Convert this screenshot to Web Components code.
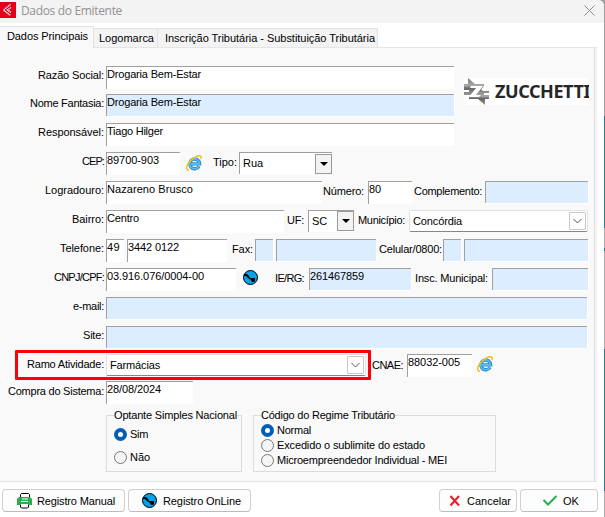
<!DOCTYPE html>
<html lang="pt-BR">
<head>
<meta charset="utf-8">
<title>Dados do Emitente</title>
<style>
  body {
    margin: 0;
    width: 605px;
    height: 517px;
    overflow: hidden;
    font: 11px/12px "Liberation Sans", Arial, sans-serif;
    color: #000;
    background: linear-gradient(#a0a0a0 116px, #2b7f8b 116px 228px, #a9a9a9 228px 248px, #2b7f8b 248px 251px, #a9a9a9 251px 349px, #2b7f8b 349px 491px, #a9a9a9 491px);
  }
</style>
</head>
<body>
<app-window>
  <fit-text slot="title" w="101">Dados do Emitente</fit-text>

  <tab-item slot="tabs" active style="width:94px"><fit-text w="81">Dados Principais</fit-text></tab-item>
  <tab-item slot="tabs" style="width:64px"><fit-text w="55">Logomarca</fit-text></tab-item>
  <tab-item slot="tabs" style="width:220px"><fit-text w="210">Inscrição Tributária - Substituição Tributária</fit-text></tab-item>

  <form-row style="height:28px">
    <form-label first><fit-text w="66">Razão Social:</fit-text></form-label>
    <text-field style="width:348px"><fit-text w="94">Drogaria Bem-Estar</fit-text></text-field>
    <brand-logo></brand-logo>
  </form-row>
  <form-row>
    <form-label first><fit-text w="74">Nome Fantasia:</fit-text></form-label>
    <text-field blue style="width:348px"><fit-text w="94">Drogaria Bem-Estar</fit-text></text-field>
  </form-row>
  <form-row>
    <form-label first><fit-text w="66">Responsável:</fit-text></form-label>
    <text-field style="width:348px"><fit-text w="56">Tiago Hilger</fit-text></text-field>
  </form-row>
  <form-row>
    <form-label first><fit-text w="22">CEP:</fit-text></form-label>
    <text-field style="width:74px"><fit-text w="52">89700-903</fit-text></text-field>
    <ui-icon name="browser" style="margin:3px 0 0 6px"></ui-icon>
    <form-label low style="width:37px;padding-left:0"><fit-text w="24" style="margin-left:11px">Tipo:</fit-text></form-label>
    <classic-select style="width:93px"><fit-text w="20">Rua</fit-text></classic-select>
  </form-row>
  <form-row>
    <form-label first><fit-text w="59">Logradouro:</fit-text></form-label>
    <text-field style="width:216px"><fit-text w="86">Nazareno Brusco</fit-text></text-field>
    <form-label low style="width:46px"><fit-text w="41">Número:</fit-text></form-label>
    <text-field style="width:44px"><fit-text w="12">80</fit-text></text-field>
    <form-label low style="width:73px"><fit-text w="68" style="margin-left:1px">Complemento:</fit-text></form-label>
    <text-field blue style="width:103px"></text-field>
  </form-row>
  <form-row>
    <form-label first><fit-text w="32">Bairro:</fit-text></form-label>
    <text-field style="width:178px"><fit-text w="32">Centro</fit-text></text-field>
    <form-label low style="width:24px"><fit-text w="17" style="margin-left:2px">UF:</fit-text></form-label>
    <classic-select flush style="width:46px"><fit-text w="15">SC</fit-text></classic-select>
    <form-label low style="width:55px"><fit-text w="47" style="margin-left:3px">Município:</fit-text></form-label>
    <combo-box style="width:179px"><fit-text w="49">Concórdia</fit-text></combo-box>
  </form-row>
  <form-row>
    <form-label first><fit-text w="44">Telefone:</fit-text></form-label>
    <text-field style="width:18px"><fit-text w="13">49</fit-text></text-field>
    <text-field style="width:100px;margin-left:3px"><fit-text w="51">3442 0122</fit-text></text-field>
    <form-label low style="width:28px"><fit-text w="21" style="margin-left:4px">Fax:</fit-text></form-label>
    <text-field blue style="width:18px"></text-field>
    <text-field blue style="width:100px;margin-left:3px"></text-field>
    <form-label low style="width:67px"><fit-text w="63" style="margin-left:2px">Celular/0800:</fit-text></form-label>
    <text-field blue style="width:18px"></text-field>
    <text-field blue style="width:124px;margin-left:3px"></text-field>
  </form-row>
  <form-row>
    <form-label first><fit-text w="50">CNPJ/CPF:</fit-text></form-label>
    <text-field style="width:130px"><fit-text w="97">03.916.076/0004-00</fit-text></text-field>
    <ui-icon name="globe" style="margin:2px 0 0 7px"></ui-icon>
    <form-label low style="width:50px"><fit-text w="29" style="margin-left:15px">IE/RG:</fit-text></form-label>
    <text-field blue style="width:102px"><fit-text w="54">261467859</fit-text></text-field>
    <form-label low style="width:81px"><fit-text w="73" style="margin-left:3px">Insc. Municipal:</fit-text></form-label>
    <text-field blue style="width:96px"></text-field>
  </form-row>
  <form-row>
    <form-label first><fit-text w="31">e-mail:</fit-text></form-label>
    <text-field blue style="width:481px"></text-field>
  </form-row>
  <form-row style="height:28px">
    <form-label first><fit-text w="21">Site:</fit-text></form-label>
    <text-field blue style="width:481px"></text-field>
  </form-row>
  <form-row highlight style="height:27px">
    <form-label first low><fit-text w="77">Ramo Atividade:</fit-text></form-label>
    <combo-box style="width:260px"><fit-text w="50">Farmácias</fit-text></combo-box>
    <form-label low style="width:41px"><fit-text w="31" style="margin-left:5px;padding-top:1px">CNAE:</fit-text></form-label>
    <text-field style="width:65px"><fit-text w="52">88032-005</fit-text></text-field>
    <ui-icon name="browser" style="margin:2px 0 0 5px"></ui-icon>
  </form-row>
  <form-row style="height:34px">
    <form-label first low><fit-text w="96">Compra do Sistema:</fit-text></form-label>
    <text-field style="width:87px"><fit-text w="54">28/08/2024</fit-text></text-field>
  </form-row>
  <form-row groups>
    <radio-group style="width:136px;--gap:23px;--first:12px">
      <fit-text slot="legend" w="123">Optante Simples Nacional</fit-text>
      <radio-option checked><fit-text w="18">Sim</fit-text></radio-option>
      <radio-option><fit-text w="20">Não</fit-text></radio-option>
    </radio-group>
    <radio-group style="width:243px;--gap:15px;--first:8px">
      <fit-text slot="legend" w="134">Código do Regime Tributário</fit-text>
      <radio-option checked><fit-text w="34">Normal</fit-text></radio-option>
      <radio-option><fit-text w="148">Excedido o sublimite do estado</fit-text></radio-option>
      <radio-option><fit-text w="170">Microempreendedor Individual - MEI</fit-text></radio-option>
    </radio-group>
  </form-row>

  <push-button slot="actions" style="width:123px;--pad:14px"><ui-icon slot="icon" name="printer"></ui-icon><fit-text w="78" style="margin-left:3px">Registro Manual</fit-text></push-button>
  <push-button slot="actions" style="width:123px;--pad:13px"><ui-icon slot="icon" name="globe"></ui-icon><fit-text w="78" style="margin-left:4px">Registro OnLine</fit-text></push-button>
  <push-button slot="actions" style="width:78px;--pad:7px;margin-left:auto"><ui-icon slot="icon" name="cross"></ui-icon><fit-text w="44" style="margin-left:3px">Cancelar</fit-text></push-button>
  <push-button slot="actions" style="width:78px;--pad:21px"><ui-icon slot="icon" name="check"></ui-icon><fit-text w="16" style="margin-left:4px">OK</fit-text></push-button>
</app-window>

<script>
  function define(name, html, Base = HTMLElement) {
    const template = document.createElement("template");
    template.innerHTML = html;
    customElements.define(name, class extends Base {
      constructor() {
        super();
        this.attachShadow({ mode: "open" }).appendChild(template.content.cloneNode(true));
      }
    });
  }

  // spreads its text evenly over the width given in "w"
  class FitText extends HTMLElement {
    connectedCallback() {
      const width = Number(this.getAttribute("w"));
      const range = document.createRange();
      range.selectNodeContents(this);
      const natural = range.getBoundingClientRect().width;
      this.style.letterSpacing = (width - natural) / this.textContent.length + "px";
    }
  }

  define("app-window", `
    <style>
      :host {
        display: flex;
        flex-direction: column;
        width: 604px;
        height: 517px;
        background: #fff;
        border-top-right-radius: 6px;
        overflow: hidden;
      }
      header {
        display: flex;
        height: 23px;
        flex: none;
        background: #f3f3f3;
      }
      header svg { display: block; }
      .title {
        flex: 1;
        padding: 2px 0 0 5px;
        font: 12px/18px "Open Sans", "Noto Sans", sans-serif;
        color: #929292;
      }
      .close { margin: 5px 9px 0 0; }
      nav {
        display: flex;
        align-items: flex-end;
        height: 24px;
        padding-top: 1px;
        box-sizing: border-box;
        flex: none;
      }
      main {
        box-sizing: border-box;
        width: 597px;
        height: 435px;
        flex: none;
        padding-top: 18px;
        background: #f9f9f9;
        border: solid #e5e5e5;
        border-width: 1px 0 1px 0;
        box-shadow: inset -2px 0 #f3f3f3, inset -3px 0 #dfdfdf;
      }
      footer {
        display: flex;
        gap: 3px;
        padding: 7px 6px 0 2px;
      }
    </style>
    <header>
      <svg width="16" height="18" viewBox="0 0 16 18">
        <rect y="2" width="16" height="16" fill="#e2001a"/>
        <path d="M10.500 4.500 3.500 10l7 5.500M11 7.500 7.500 10l3.500 2.500" fill="none" stroke="#fff" stroke-width="1.400" stroke-dasharray="1.300 .5"/>
      </svg>
      <div class="title"><slot name="title"></slot></div>
      <svg class="close" width="11" height="11"><path d="m.5.5 10 10m0-10-10 10" stroke="#8b8b8b" fill="none"/></svg>
    </header>
    <nav><slot name="tabs"></slot></nav>
    <main><slot></slot></main>
    <footer><slot name="actions"></slot></footer>
  `);

  define("tab-item", `
    <style>
      :host {
        display: block;
        box-sizing: border-box;
        height: 19px;
        padding: 3px 0 0 5px;
        background: #f3f3f3;
        border: solid #e3e3e3;
        border-width: 1px 1px 0 0;
      }
      :host([active]) {
        position: relative;
        height: 22px;
        margin-bottom: -1px;
        padding: 3px 0 0 7px;
        background: #f9f9f9;
      }
      :host(:nth-of-type(3)) { padding-left: 7px; }
    </style>
    <slot></slot>
  `);

  define("form-row", `
    <style>
      :host {
        position: relative;
        display: flex;
        align-items: flex-start;
        height: 29px;
      }
      :host([groups]) { gap: 11px; padding-left: 106px; }
      .frame { display: none; }
      /* red frame drawn over the row */
      :host([highlight]) .frame {
        display: block;
        position: absolute;
        box-sizing: border-box;
        left: 15px;
        top: -4px;
        width: 356px;
        height: 30px;
        border: 3px solid #fb0007;
        border-radius: 1px;
      }
    </style>
    <slot></slot>
    <div class="frame"></div>
  `);

  define("form-label", `
    <style>
      :host {
        display: block;
        box-sizing: border-box;
        flex: none;
        padding: 3px 0 0 1px;
        white-space: nowrap;
      }
      :host([low]) { padding-top: 4px; }
      :host([first]) {
        width: 106px;
        padding-right: 2px;
        text-align: right;
      }
    </style>
    <slot></slot>
  `);

  define("text-field", `
    <style>
      :host {
        display: block;
        box-sizing: border-box;
        flex: none;
        height: 23px;
        padding: 1px 0 0;
        background: #fff;
        border: solid #a0a0a0;
        border-width: 1px 0 0 1px;
        white-space: nowrap;
      }
      :host([blue]) {
        height: 22px;
        background: #dcedff;
        box-shadow: 0 1px #fff, 1px 0 #fff;
      }
    </style>
    <slot></slot>
  `);

  define("classic-select", `
    <style>
      :host {
        display: flex;
        justify-content: space-between;
        box-sizing: border-box;
        flex: none;
        height: 22px;
        padding: 1px 0 0 3px;
        border: solid #a0a0a0;
        border-width: 1px 0 0 1px;
        background: #fff;
      }
      :host([flush]) { padding-top: 0; }
      .text { padding-top: 3px; }
      :host([flush]) .text { padding-top: 4px; }
      .button {
        display: grid;
        place-items: center;
        box-sizing: border-box;
        width: 17px;
        height: 20px;
        border: 1px solid #999;
        background: #f3f3f3;
      }
    </style>
    <div class="text"><slot></slot></div>
    <div class="button"><svg width="8" height="4"><path d="M0 0h8L4 4z"/></svg></div>
  `);

  define("combo-box", `
    <style>
      :host {
        display: flex;
        justify-content: space-between;
        box-sizing: border-box;
        flex: none;
        height: 22px;
        padding: 1px 1px 0 3px;
        background: #fff;
        border: 1px solid #e2e2e2;
        border-bottom-color: #868686;
        border-radius: 2px;
      }
      .text { padding-top: 3px; }
      .button {
        display: grid;
        place-items: center;
        box-sizing: border-box;
        width: 17px;
        height: 18px;
        border: 1px solid #c8c8c8;
        border-radius: 1px;
        background: #fdfdfd;
      }
    </style>
    <div class="text"><slot></slot></div>
    <div class="button"><svg width="9" height="6"><path d="m.5 1 4 4 4-4" fill="none" stroke="#555"/></svg></div>
  `);

  define("radio-group", `
    <style>
      :host {
        display: block;
        box-sizing: border-box;
        flex: none;
        height: 57px;
        border: 1px solid #dcdcdc;
      }
      .legend {
        width: max-content;
        height: 12px;
        margin: -7px 0 0 7px;
        background: #f9f9f9;
      }
      .options {
        display: grid;
        grid-auto-rows: var(--gap);
        margin: calc(var(--first) - 5px) 0 0 7px;
      }
    </style>
    <div class="legend"><slot name="legend"></slot></div>
    <div class="options"><slot></slot></div>
  `);

  define("radio-option", `
    <style>
      :host { display: flex; gap: 3px; height: 13px; }
      i {
        box-sizing: border-box;
        width: 13px;
        height: 13px;
        border: 1px solid #777;
        border-radius: 50%;
        background: #f5f5f5;
      }
      :host([checked]) i { border: 4px solid #005fb8; background: #fff; }
    </style>
    <i></i><slot></slot>
  `);

  define("push-button", `
    <style>
      :host {
        display: flex;
        align-items: center;
        gap: 1px;
        box-sizing: border-box;
        height: 23px;
        padding-left: var(--pad);
        border: 1px solid #d0d0d0;
        border-bottom-color: #bcbcbc;
        border-radius: 4px;
        background: #fdfdfd;
      }
    </style>
    <slot name="icon"></slot><slot></slot>
  `);

  define("brand-logo", `
    <style>
      :host {
        display: flex;
        width: 125px;
        height: 27px;
        margin: 12px 0 0 10px;
        overflow: hidden;
        background: #fff;
      }
      svg { flex: none; }
      fit-text {
        margin-left: 6px;
        font: 700 18px/27px "Noto Sans", "Open Sans", sans-serif;
        color: #262626;
      }
    </style>
    <svg width="25" height="27" viewBox="0 0 25 27">
      <defs><linearGradient id="g" x2="0" y2="1"><stop stop-color="#777"/><stop offset=".45" stop-color="#aaa"/><stop offset=".6" stop-color="#666"/><stop offset="1" stop-color="#999"/></linearGradient></defs>
      <path d="M4 0l7 6h9v2L12 17H0v-3h5v-2H0V6h4z" fill="url(#g)"/>
      <path d="M25 13v2h-5v2h5v4h-4v6l-7-6H5v-2L17 11l2 2z" fill="url(#g)"/>
      <path d="M7 8h12l-7 9h5l-2 2H5l7-9H6z" fill="#fff"/>
    </svg>
    <fit-text w="95">ZUCCHETTI</fit-text>
  `);

  const icons = {
    browser: `<svg width="16" height="16" viewBox="0 0 16 16">
      <path d="M13 11.200A4.900 4.900 0 1 1 13.600 8.900H5" fill="none" stroke="#2788c8" stroke-width="3.400"/>
      <path d="M12.900 11.200A4.900 4.900 0 1 1 13.500 8.900H5" fill="none" stroke="#5dbdec" stroke-width="1.700"/>
      <path d="M3 15.200C-.5 15.500 0 10.500 4 6.200 8 1.900 14 -.8 15 1.500c.3.700.2 1.500-.2 2.500" fill="none" stroke="#f3bd22" stroke-width="1.500"/>
    </svg>`,
    globe: `<svg width="16" height="16" viewBox="0 0 16 16">
      <circle cx="7.500" cy="7.500" r="7" fill="#00a2e8" stroke="#000"/>
      <path d="M1.500 4H4l2 2 1 2h5v3l-1 1H9l-1-2-3-2-2-2H1z"/>
    </svg>`,
    printer: `<svg width="16" height="16" viewBox="0 0 16 16">
      <path d="M3.500 4.500v-3l1-1h7l1 1v3M3.500 11v3l1 1h6l1-1v-3" fill="#fff" stroke="#000"/>
      <path d="M2 4h11l2 2v6H0V6z" fill="#22b14c"/>
      <path d="M5 6h6M4 8.500h7M4 11.500h7" stroke="#fff" fill="none"/>
    </svg>`,
    cross: `<svg width="16" height="16" viewBox="0 0 16 16"><path d="m3.500 3 8.500 9.500M12 3l-8.500 9.500" fill="none" stroke="#ed1c24" stroke-width="2"/></svg>`,
    check: `<svg width="16" height="16" viewBox="0 0 16 16"><path d="m1.500 7 4.500 4.500 8.500-8.500" fill="none" stroke="#22b14c" stroke-width="2"/></svg>`,
  };

  customElements.define("ui-icon", class extends HTMLElement {
    constructor() {
      super();
      const shadow = this.attachShadow({ mode: "open" });
      shadow.innerHTML = `
        <style>:host { display: block; flex: none; width: 16px; height: 16px; } svg { display: block; }</style>
        ${icons[this.getAttribute("name")]}`;
    }
  });

  define("fit-text", `
    <style>:host { display: inline-block; white-space: nowrap; }</style>
    <slot></slot>
  `, FitText);
</script>
</body>
</html>
